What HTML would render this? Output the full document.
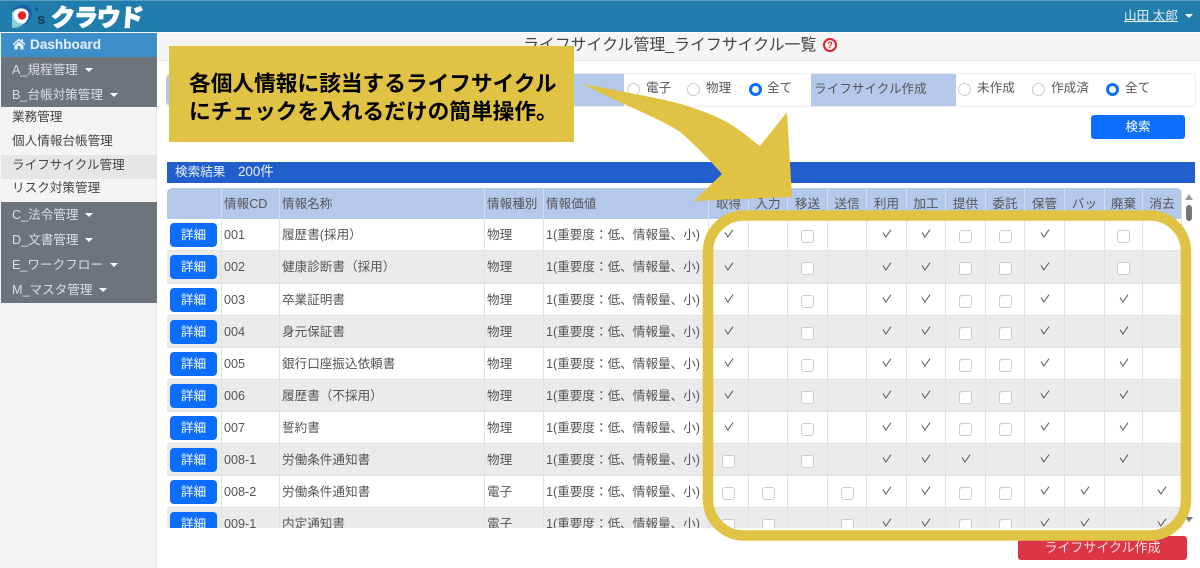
<!DOCTYPE html>
<html lang="ja"><head><meta charset="utf-8"><title>ライフサイクル一覧</title>
<style>
*{box-sizing:border-box}
html,body{margin:0;padding:0;width:1200px;height:568px;overflow:hidden;background:#fff}
body{position:relative;font:12.6px/1.2 "Liberation Sans","Noto Sans CJK JP",sans-serif;color:#555}
.a{position:absolute;white-space:nowrap}
.car:after{content:"";display:inline-block;margin-left:7px;vertical-align:2px;border:4px solid transparent;border-top:4px solid #fff;border-bottom:0}
.s{position:absolute;left:12px;color:#d9dde0;font-size:12.6px;line-height:16px;white-space:nowrap}
.w{position:absolute;left:12px;color:#444;font-size:12.6px;line-height:16px;white-space:nowrap}
.r{position:absolute;width:13px;height:13px;border:1px solid #ccc;border-radius:50%;background:#fff}
.r.on{border:3.5px solid #0d6efd}
.l{position:absolute;color:#555;font-size:12.6px;line-height:16px;white-space:nowrap}
table{border-collapse:separate;border-spacing:0;table-layout:fixed;width:1015px}
th,td{padding:0 2px;overflow:hidden;white-space:nowrap;border-right:1px solid #e3e3e3;font-weight:400;text-align:left;color:#555}
th{background:#b4c8ea;height:31px;border-right:1px solid #d3dcec;padding-top:3px}
td{border-bottom:1px solid #e2e2e2;height:32px;background:#fff;padding-top:2px}
tr.g td{background:#ebebeb}
th.c{text-align:center;padding:3px 0 0}
td.c{padding:0;text-align:center}
td u{display:block;width:47px;height:24px;background:#0d6efd;border-radius:4px;color:#fff;text-align:center;line-height:24px;text-decoration:none}
td.f{padding:0 0 0 3px}
.k{display:block;width:10px;height:9px;margin:-2px auto 0}
.b{display:block;width:13px;height:13px;margin:3px auto 0;border:1px solid #ccc;border-radius:3px;background:#fff}
</style></head><body>
<svg width="0" height="0" style="position:absolute"><defs><path id="kk" d="M1 3.5L3.8 8L9 .7" fill="none" stroke="#555" stroke-width="1"/></defs></svg>

<!-- header -->
<div class="a" style="left:0;top:0;width:1200px;height:32px;background:#217dab;border-top:1px solid #5a9fc2"></div>
<svg class="a" style="left:10px;top:3px" width="26" height="27" viewBox="0 0 26 27">
<path d="M2 9L2 25L11 24C16 22 20 18 21 12L8 5Z" fill="#8ad4d8"/>
<circle cx="12" cy="12" r="8.500" fill="#fff"/>
<path d="M2.500 9C5 3 12 .5 17 2.500C23 5 23.500 13 19 18C16 22 11 24.500 8 24C14 22 19.500 17 18.500 10.500C17.500 5 9 3 2.500 9Z" fill="#1f5fa8"/>
<circle cx="12" cy="12.500" r="4.200" fill="#e8242c"/>
</svg>
<div class="a" style="left:35px;top:5px;font:700 11px/14px 'Liberation Sans',sans-serif;color:#123a63">’</div>
<div class="a" style="left:37px;top:12px;font:700 15px/16px 'Liberation Sans',sans-serif;color:#123a63">s</div>
<div class="a" style="left:50px;top:0;font:900 24px/32px 'Noto Sans CJK JP',sans-serif;letter-spacing:-1.2px;color:#fff;-webkit-text-stroke:1px #fff;transform:skewX(-4deg);transform-origin:0 100%">クラウド</div>
<div class="a car" style="left:1124px;top:8px;font-size:12.6px;line-height:16px;color:#e8f2f7;text-decoration:underline">山田 太郎</div>

<!-- sidebar -->
<div class="a" style="left:0;top:32px;width:157px;height:536px;background:#f4f4f4;border-right:1px solid #e8e8e8"></div>
<div class="a" style="left:1px;top:33px;width:156px;height:24px;background:#3d8ec9"></div>
<svg class="a" style="left:12px;top:38px" width="14" height="12" viewBox="0 0 14 12"><path d="M7 .5L.5 6.300L1.500 7.300L7 2.500L12.500 7.300L13.500 6.300L11 4V1H9.500V2.700ZM2.500 7.500V11.500H5.700V8H8.300V11.500H11.500V7.500L7 3.500Z" fill="#e6f0f8"/></svg>
<div class="a" style="left:30px;top:36px;font:700 13.6px/17px 'Liberation Sans',sans-serif;color:#e6f0f8">Dashboard</div>
<div class="a" style="left:1px;top:57px;width:156px;height:50px;background:#6c757d"></div>
<div class="s car" style="top:62px">A_規程管理</div>
<div class="s car" style="top:87px">B_台帳対策管理</div>
<div class="a" style="left:1px;top:155px;width:156px;height:24px;background:#e6e6e6"></div>
<div class="w" style="top:109px">業務管理</div>
<div class="w" style="top:133px">個人情報台帳管理</div>
<div class="w" style="top:157px">ライフサイクル管理</div>
<div class="w" style="top:180px">リスク対策管理</div>
<div class="a" style="left:1px;top:202px;width:156px;height:101px;background:#6c757d"></div>
<div class="s car" style="top:207px">C_法令管理</div>
<div class="s car" style="top:232px">D_文書管理</div>
<div class="s car" style="top:257px">E_ワークフロー</div>
<div class="s car" style="top:282px">M_マスタ管理</div>

<!-- title -->
<div class="a" style="left:158px;top:33px;width:1042px;height:28px;background:#f5f5f5;border-bottom:1px solid #e9e9e9"></div>
<div class="a" style="left:523px;top:36px;font-size:15.900px;line-height:19px;color:#444">ライフサイクル管理_ライフサイクル一覧</div>
<div class="a" style="left:823px;top:38px;width:14px;height:14px;border:2px solid #e3202c;border-radius:50%;color:#e3202c;font:700 9px/10px 'Liberation Sans',sans-serif;text-align:center">?</div>

<!-- filter -->
<div class="a" style="left:166px;top:73px;width:1030px;height:34px;border:1px solid #ececec;border-radius:5px;background:#fff"></div>
<div class="a" style="left:166px;top:74px;width:458px;height:32px;background:#b4c8ea;border-radius:5px 0 0 5px"></div>
<div class="a" style="left:811px;top:74px;width:145px;height:32px;background:#b4c8ea"></div>
<div class="l" style="left:814px;top:81px">ライフサイクル作成</div>
<div class="r" style="left:627px;top:83px"></div><div class="l" style="left:646px;top:80px">電子</div>
<div class="r" style="left:687px;top:83px"></div><div class="l" style="left:706px;top:80px">物理</div>
<div class="r on" style="left:749px;top:83px"></div><div class="l" style="left:767px;top:80px">全て</div>
<div class="r" style="left:958px;top:83px"></div><div class="l" style="left:977px;top:80px">未作成</div>
<div class="r" style="left:1032px;top:83px"></div><div class="l" style="left:1051px;top:80px">作成済</div>
<div class="r on" style="left:1106px;top:83px"></div><div class="l" style="left:1125px;top:80px">全て</div>
<div class="a" style="left:1091px;top:115px;width:94px;height:24px;background:#0d6efd;border-radius:3px;color:#fff;text-align:center;line-height:24px">検索</div>

<!-- result bar -->
<div class="a" style="left:167px;top:162px;width:1028px;height:21px;background:#225fcd;color:#eaf0fb;padding-left:8px;line-height:20px">検索結果　<span style="font-size:13.4px">200件</span></div>

<!-- table -->
<div class="a" style="left:167px;top:188px;width:1015px;height:340px;overflow:hidden;border-radius:5px 5px 0 0">
<table>
<colgroup><col style="width:55px"><col style="width:58px"><col style="width:205px"><col style="width:59px"><col style="width:165px"><col style="width:40px"><col style="width:39px"><col style="width:40px"><col style="width:39px"><col style="width:40px"><col style="width:39px"><col style="width:40px"><col style="width:39px"><col style="width:40px"><col style="width:40px"><col style="width:38px"><col style="width:39px"></colgroup>
<tr><th></th><th>情報CD</th><th>情報名称</th><th>情報種別</th><th>情報価値</th><th class="c">取得</th><th class="c">入力</th><th class="c">移送</th><th class="c">送信</th><th class="c">利用</th><th class="c">加工</th><th class="c">提供</th><th class="c">委託</th><th class="c">保管</th><th class="c">バッ</th><th class="c">廃棄</th><th class="c">消去</th></tr>
<tr><td class="f"><u>詳細</u></td><td>001</td><td>履歴書(採用）</td><td>物理</td><td>1(重要度：低、情報量、小)</td><td class="c"><svg class="k"><use href="#kk"/></svg></td><td class="c"></td><td class="c"><i class="b"></i></td><td class="c"></td><td class="c"><svg class="k"><use href="#kk"/></svg></td><td class="c"><svg class="k"><use href="#kk"/></svg></td><td class="c"><i class="b"></i></td><td class="c"><i class="b"></i></td><td class="c"><svg class="k"><use href="#kk"/></svg></td><td class="c"></td><td class="c"><i class="b"></i></td><td class="c"></td></tr>
<tr class="g" style="height:33px"><td class="f" style="height:33px"><u>詳細</u></td><td>002</td><td>健康診断書（採用）</td><td>物理</td><td>1(重要度：低、情報量、小)</td><td class="c"><svg class="k"><use href="#kk"/></svg></td><td class="c"></td><td class="c"><i class="b"></i></td><td class="c"></td><td class="c"><svg class="k"><use href="#kk"/></svg></td><td class="c"><svg class="k"><use href="#kk"/></svg></td><td class="c"><i class="b"></i></td><td class="c"><i class="b"></i></td><td class="c"><svg class="k"><use href="#kk"/></svg></td><td class="c"></td><td class="c"><i class="b"></i></td><td class="c"></td></tr>
<tr><td class="f"><u>詳細</u></td><td>003</td><td>卒業証明書</td><td>物理</td><td>1(重要度：低、情報量、小)</td><td class="c"><svg class="k"><use href="#kk"/></svg></td><td class="c"></td><td class="c"><i class="b"></i></td><td class="c"></td><td class="c"><svg class="k"><use href="#kk"/></svg></td><td class="c"><svg class="k"><use href="#kk"/></svg></td><td class="c"><i class="b"></i></td><td class="c"><i class="b"></i></td><td class="c"><svg class="k"><use href="#kk"/></svg></td><td class="c"></td><td class="c"><svg class="k"><use href="#kk"/></svg></td><td class="c"></td></tr>
<tr class="g"><td class="f"><u>詳細</u></td><td>004</td><td>身元保証書</td><td>物理</td><td>1(重要度：低、情報量、小)</td><td class="c"><svg class="k"><use href="#kk"/></svg></td><td class="c"></td><td class="c"><i class="b"></i></td><td class="c"></td><td class="c"><svg class="k"><use href="#kk"/></svg></td><td class="c"><svg class="k"><use href="#kk"/></svg></td><td class="c"><i class="b"></i></td><td class="c"><i class="b"></i></td><td class="c"><svg class="k"><use href="#kk"/></svg></td><td class="c"></td><td class="c"><svg class="k"><use href="#kk"/></svg></td><td class="c"></td></tr>
<tr><td class="f"><u>詳細</u></td><td>005</td><td>銀行口座振込依頼書</td><td>物理</td><td>1(重要度：低、情報量、小)</td><td class="c"><svg class="k"><use href="#kk"/></svg></td><td class="c"></td><td class="c"><i class="b"></i></td><td class="c"></td><td class="c"><svg class="k"><use href="#kk"/></svg></td><td class="c"><svg class="k"><use href="#kk"/></svg></td><td class="c"><i class="b"></i></td><td class="c"><i class="b"></i></td><td class="c"><svg class="k"><use href="#kk"/></svg></td><td class="c"></td><td class="c"><svg class="k"><use href="#kk"/></svg></td><td class="c"></td></tr>
<tr class="g"><td class="f"><u>詳細</u></td><td>006</td><td>履歴書（不採用）</td><td>物理</td><td>1(重要度：低、情報量、小)</td><td class="c"><svg class="k"><use href="#kk"/></svg></td><td class="c"></td><td class="c"><i class="b"></i></td><td class="c"></td><td class="c"><svg class="k"><use href="#kk"/></svg></td><td class="c"><svg class="k"><use href="#kk"/></svg></td><td class="c"><i class="b"></i></td><td class="c"><i class="b"></i></td><td class="c"><svg class="k"><use href="#kk"/></svg></td><td class="c"></td><td class="c"><svg class="k"><use href="#kk"/></svg></td><td class="c"></td></tr>
<tr><td class="f"><u>詳細</u></td><td>007</td><td>誓約書</td><td>物理</td><td>1(重要度：低、情報量、小)</td><td class="c"><svg class="k"><use href="#kk"/></svg></td><td class="c"></td><td class="c"><i class="b"></i></td><td class="c"></td><td class="c"><svg class="k"><use href="#kk"/></svg></td><td class="c"><svg class="k"><use href="#kk"/></svg></td><td class="c"><i class="b"></i></td><td class="c"><i class="b"></i></td><td class="c"><svg class="k"><use href="#kk"/></svg></td><td class="c"></td><td class="c"><svg class="k"><use href="#kk"/></svg></td><td class="c"></td></tr>
<tr class="g"><td class="f"><u>詳細</u></td><td>008-1</td><td>労働条件通知書</td><td>物理</td><td>1(重要度：低、情報量、小)</td><td class="c"><i class="b"></i></td><td class="c"></td><td class="c"><i class="b"></i></td><td class="c"></td><td class="c"><svg class="k"><use href="#kk"/></svg></td><td class="c"><svg class="k"><use href="#kk"/></svg></td><td class="c"><svg class="k"><use href="#kk"/></svg></td><td class="c"></td><td class="c"><svg class="k"><use href="#kk"/></svg></td><td class="c"></td><td class="c"><svg class="k"><use href="#kk"/></svg></td><td class="c"></td></tr>
<tr><td class="f"><u>詳細</u></td><td>008-2</td><td>労働条件通知書</td><td>電子</td><td>1(重要度：低、情報量、小)</td><td class="c"><i class="b"></i></td><td class="c"><i class="b"></i></td><td class="c"></td><td class="c"><i class="b"></i></td><td class="c"><svg class="k"><use href="#kk"/></svg></td><td class="c"><svg class="k"><use href="#kk"/></svg></td><td class="c"><i class="b"></i></td><td class="c"><i class="b"></i></td><td class="c"><svg class="k"><use href="#kk"/></svg></td><td class="c"><svg class="k"><use href="#kk"/></svg></td><td class="c"></td><td class="c"><svg class="k"><use href="#kk"/></svg></td></tr>
<tr class="g"><td class="f"><u>詳細</u></td><td>009-1</td><td>内定通知書</td><td>電子</td><td>1(重要度：低、情報量、小)</td><td class="c"><i class="b"></i></td><td class="c"><i class="b"></i></td><td class="c"></td><td class="c"><i class="b"></i></td><td class="c"><svg class="k"><use href="#kk"/></svg></td><td class="c"><svg class="k"><use href="#kk"/></svg></td><td class="c"><i class="b"></i></td><td class="c"><i class="b"></i></td><td class="c"><svg class="k"><use href="#kk"/></svg></td><td class="c"><svg class="k"><use href="#kk"/></svg></td><td class="c"></td><td class="c"><svg class="k"><use href="#kk"/></svg></td></tr>
</table>
</div>

<!-- scrollbar -->
<div class="a" style="left:1185px;top:194px;border:4px solid transparent;border-bottom:6px solid #999;border-top:0"></div>
<div class="a" style="left:1186px;top:205px;width:6px;height:16px;background:#777;border-radius:3px"></div>
<div class="a" style="left:1185px;top:517px;border:4px solid transparent;border-top:5px solid #777;border-bottom:0"></div>

<!-- red button -->
<div class="a" style="left:1018px;top:536px;width:169px;height:24px;background:#dc3545;border-radius:3px;color:#fbdfe2;text-align:center;line-height:23px;font-size:13px">ライフサイクル作成</div>

<!-- callout overlays -->
<svg class="a" style="left:0;top:0" width="1200" height="568" viewBox="0 0 1200 568">
<path d="M583 84C620 91 650 97 665 100C695 107 720 117 735 127C745 134 752 140 760 146L787 112L792 197L694 201L722 174C708 158 692 142 680 132C660 118 620 104 583 84Z" fill="#e0c245"/>
<rect x="708" y="215.500" width="478" height="320" rx="36" ry="36" fill="none" stroke="#e0c245" stroke-width="10.500"/>
</svg>
<div class="a" style="left:169px;top:46px;width:405px;height:96px;background:#e0c245"></div>
<div class="a" style="left:189px;top:70px;font:700 21.700px/28px 'Liberation Sans','Noto Sans CJK JP',sans-serif;color:#000">各個人情報に該当するライフサイクル<br>にチェックを入れるだけの簡単操作。</div>
</body></html>
